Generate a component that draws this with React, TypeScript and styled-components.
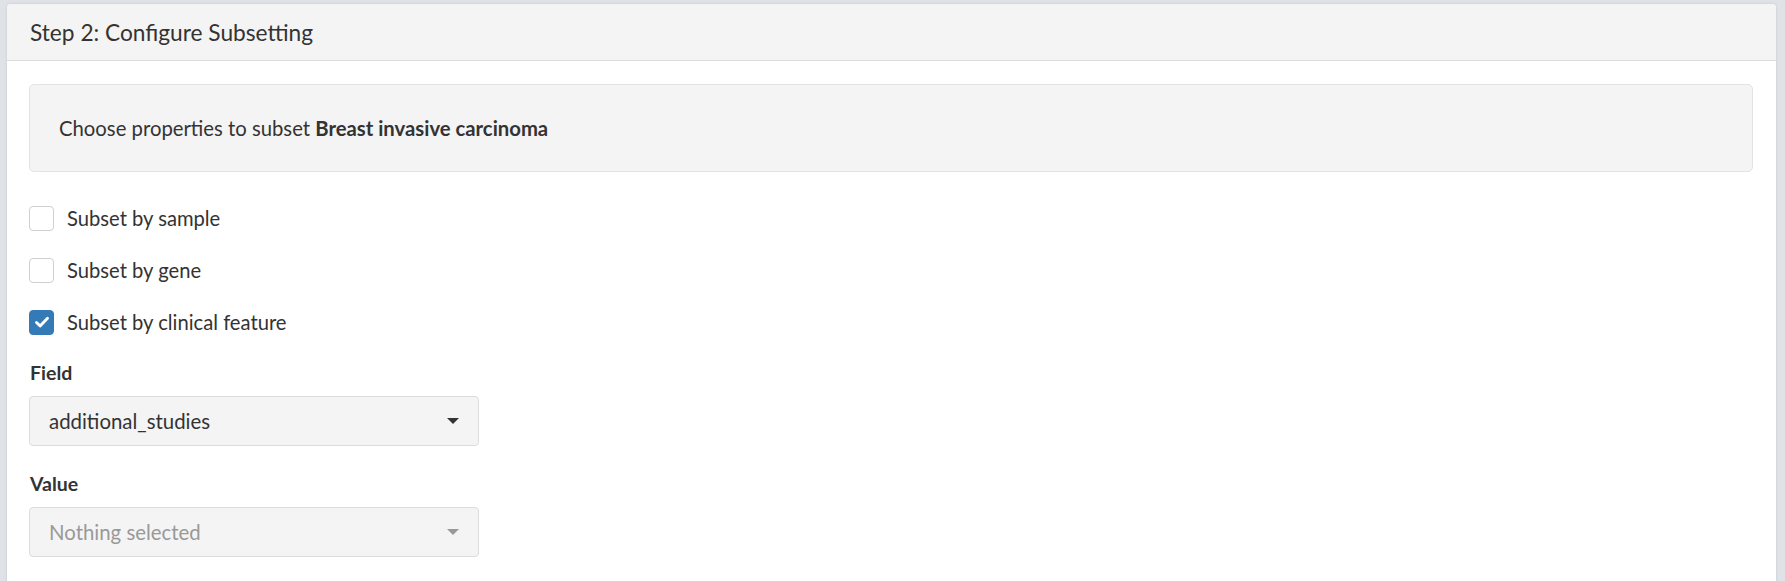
import React from 'react';
import styled, {createGlobalStyle} from 'styled-components';

const GlobalStyle = createGlobalStyle`
  html, body {
    margin: 0;
    padding: 0;
    background: #dfe2e7;
  }
  body {
    font-family: Lato, "Noto Sans", sans-serif;
    color: #333;
  }
`;

const Page = styled.div`
  padding: 4px 9px 0 7px;
  height: 581px;
  box-sizing: border-box;
  overflow: hidden;
`;

const Panel = styled.div`
  background: #fff;
  border-radius: 4px 4px 0 0;
  box-shadow: 0 0 3px rgba(0, 0, 0, 0.12);
  min-height: 600px;
`;

const PanelHeader = styled.div`
  height: 56px;
  display: flex;
  align-items: center;
  padding: 0 23px;
  background: #f4f4f4;
  border-bottom: 1px solid #dcdcdc;
  border-radius: 4px 4px 0 0;
  font-size: 22.7px;
`;

const PanelBody = styled.div`
  padding: 23px 23px 0 22px;
`;

const Well = styled.div`
  height: 86px;
  display: flex;
  align-items: center;
  padding: 0 29px;
  background: #f4f4f4;
  border: 1px solid #e3e3e3;
  border-radius: 5px;
  font-size: 20.3px;
  margin-bottom: 33px;
  b {
    font-weight: 700;
  }
`;

const CheckRow = styled.label`
  display: flex;
  align-items: center;
  gap: 13px;
  height: 26px;
  margin-bottom: 26px;
  font-size: 20.2px;
`;

const Box = styled.span<{ $checked?: boolean }>`
  width: 25px;
  height: 25px;
  box-sizing: border-box;
  border-radius: 4px;
  display: flex;
  align-items: center;
  justify-content: center;
  border: 1px solid ${p => (p.$checked ? '#337ab7' : '#cfcfcf')};
  background: ${p => (p.$checked ? '#337ab7' : '#fff')};
`;

const FieldLabel = styled.div`
  font-weight: 700;
  font-size: 19.5px;
  margin: 3px 0 11px 1px;
  line-height: 24px;
`;

const Select = styled.div<{ $muted?: boolean }>`
  width: 450px;
  height: 50px;
  box-sizing: border-box;
  display: flex;
  align-items: center;
  justify-content: space-between;
  padding: 0 19px 0 19px;
  background: #f4f4f4;
  border: 1px solid #dcdcdc;
  border-radius: 4px;
  font-size: 20.4px;
  color: ${p => (p.$muted ? '#999' : '#333')};
  margin-bottom: 26px;
`;

const Caret = styled.span<{ $muted?: boolean }>`
  width: 0;
  height: 0;
  border-left: 6px solid transparent;
  border-right: 6px solid transparent;
  border-top: 6px solid ${p => (p.$muted ? '#999' : '#333')};
`;

const Check = () => (
  <svg width="18" height="18" viewBox="0 0 18 18">
    <path d="M3.5 9.5l3.6 3.4L14.5 5.2" fill="none" stroke="#fff" strokeWidth="2.9" strokeLinecap="round" strokeLinejoin="round"/>
  </svg>
);

const options = [
  {label: 'Subset by sample', checked: false},
  {label: 'Subset by gene', checked: false},
  {label: 'Subset by clinical feature', checked: true},
];

const App: React.FunctionComponent = () => (
  <Page>
    <GlobalStyle/>
    <Panel>
      <PanelHeader>Step 2: Configure Subsetting</PanelHeader>
      <PanelBody>
        <Well>
          <span>Choose properties to subset <b>Breast invasive carcinoma</b></span>
        </Well>
        {options.map(o => (
          <CheckRow key={o.label}>
            <Box $checked={o.checked}>{o.checked && <Check/>}</Box>
            {o.label}
          </CheckRow>
        ))}
        <FieldLabel>Field</FieldLabel>
        <Select>
          additional_studies
          <Caret/>
        </Select>
        <FieldLabel>Value</FieldLabel>
        <Select $muted>
          Nothing selected
          <Caret $muted/>
        </Select>
      </PanelBody>
    </Panel>
  </Page>
);

export default App;
